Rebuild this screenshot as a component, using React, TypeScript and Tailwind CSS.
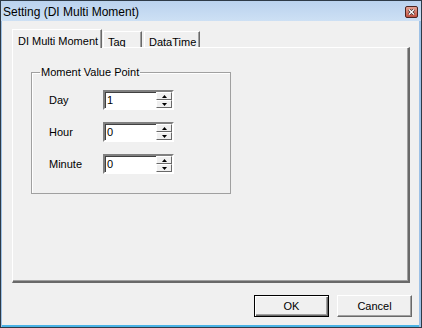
import React from "react";

function SpinArrow({ up }: { up: boolean }) {
  return (
    <svg width="5" height="3" viewBox="0 0 5 3" className="block">
      <polygon points={up ? "2.5,0 5,3 0,3" : "0,0 5,0 2.5,3"} fill="#000" />
    </svg>
  );
}

function SpinBox({ value }: { value: string }) {
  return (
    <div className="flex w-[71px] h-[20px] border-2 border-t-[#808080] border-l-[#808080] border-r-[#ffffff] border-b-[#ffffff] bg-white shadow-[inset_1px_1px_0_#404040]">
      <div className="flex-1 pl-[2px] pt-[1px] leading-[15px]">{value}</div>
      <div className="flex flex-col w-[16px]">
        <div className="h-[8px] flex items-center justify-center bg-[#f0f0f0] border-t border-l border-t-white border-l-white border-r border-b border-r-[#696969] border-b-[#696969]">
          <SpinArrow up />
        </div>
        <div className="h-[8px] flex items-center justify-center bg-[#f0f0f0] border-t border-l border-t-white border-l-white border-r border-b border-r-[#696969] border-b-[#696969]">
          <SpinArrow up={false} />
        </div>
      </div>
    </div>
  );
}

export default function App() {
  const rows = [
    { label: "Day", value: "1" },
    { label: "Hour", value: "0" },
    { label: "Minute", value: "0" },
  ];

  return (
    <div className="w-[422px] h-[328px] flex flex-col border border-[#2e3a47] bg-[#9dc1e6] font-['Liberation_Sans',Arial,sans-serif] text-[11px] text-black">
      {/* title bar */}
      <div className="h-[20px] flex items-center justify-between pl-[2px] pr-[3px] bg-gradient-to-b from-[#bad2ee] to-[#cde0f4]">
        <span className="text-[12px] pt-[1px]">Setting (DI Multi Moment)</span>
        <div className="w-[13px] h-[12px] mt-[2px] flex items-center justify-center rounded-[2px] border border-[#4d2420] bg-gradient-to-b from-[#e6a394] to-[#c0503f]">
          <svg width="7" height="6" viewBox="0 0 7 6">
            <path d="M1 0.5 L6 5.5 M6 0.5 L1 5.5" stroke="#3a2a2a" strokeWidth="2.6" />
            <path d="M1 0.5 L6 5.5 M6 0.5 L1 5.5" stroke="#ffffff" strokeWidth="1.4" />
          </svg>
        </div>
      </div>

      {/* client area */}
      <div className="flex-1 flex flex-col ml-[1px] mr-[2px] bg-[#f0f0f0] border-b-2 border-b-[#4ab3e6]">
        {/* tabs */}
        <div className="flex items-end h-[18px] mt-[8px] pl-[10px]">
          <div className="relative z-10 w-[90px] h-[19px] -mb-[1px] pl-[5px] pt-[3px] bg-[#f0f0f0] border-t border-l border-t-white border-l-white border-r border-r-[#696969] shadow-[inset_-1px_0_0_#a0a0a0]">
            DI Multi Moment
          </div>
          <div className="ml-[1px] w-[39px] h-[16px] pl-[4px] pt-[2px] border-t border-l border-t-white border-l-white border-r border-r-[#696969] shadow-[inset_-1px_0_0_#a0a0a0]">
            Taq
          </div>
          <div className="ml-[2px] w-[56px] h-[16px] pl-[4px] pt-[2px] border-t border-l border-t-white border-l-white border-r border-r-[#696969] shadow-[inset_-1px_0_0_#a0a0a0]">
            DataTime
          </div>
        </div>

        {/* tab panel */}
        <div className="ml-[10px] w-[398px] h-[236px] border-t border-l border-t-white border-l-white border-r-2 border-b-2 border-r-[#696969] border-b-[#696969] shadow-[inset_-1px_-1px_0_#a0a0a0]">
          <fieldset className="ml-[18px] mt-[18px] w-[200px] border border-[#a0a0a0] shadow-[inset_1px_1px_0_#ffffff]">
            <legend className="ml-[8px] px-[1px] leading-[13px]">Moment Value Point</legend>
            <div className="flex flex-col gap-[12px] pl-[17px] pt-[11px] pb-[19px]">
              {rows.map((r) => (
                <div key={r.label} className="flex items-center">
                  <span className="w-[54px]">{r.label}</span>
                  <SpinBox value={r.value} />
                </div>
              ))}
            </div>
          </fieldset>
        </div>

        {/* buttons */}
        <div className="flex-1 flex items-end justify-end gap-[8px] pr-[7px] pb-[8px]">
          <button className="w-[75px] h-[22px] border border-black bg-[#f0f0f0] shadow-[inset_1px_1px_0_#ffffff,inset_-1px_-1px_0_#696969,inset_-2px_-2px_0_#a0a0a0]">
            OK
          </button>
          <button className="w-[75px] h-[22px] bg-[#f0f0f0] border-t border-l border-t-white border-l-white border-r border-b border-r-[#696969] border-b-[#696969] shadow-[inset_-1px_-1px_0_#a0a0a0]">
            Cancel
          </button>
        </div>
      </div>
    </div>
  );
}
